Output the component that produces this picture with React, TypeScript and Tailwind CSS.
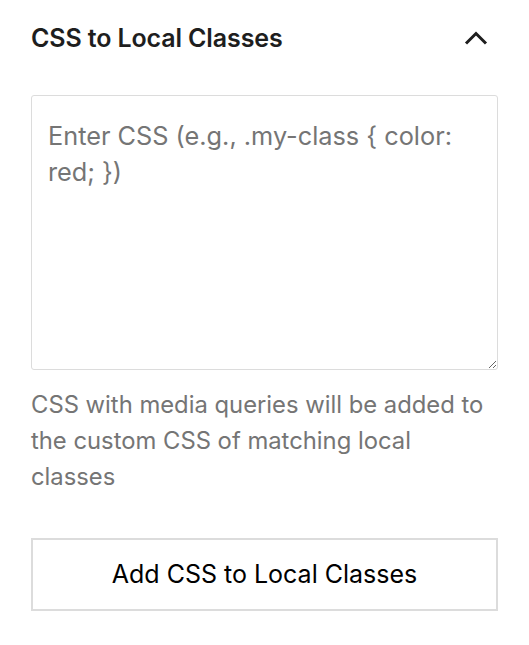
export default function App() {
  return (
    <div className="min-h-screen bg-white px-[31px] pt-[21px] font-['Inter',sans-serif] text-[#1e1e1e]">
      <div className="flex items-center justify-between">
        <h2 className="text-[25px] font-semibold leading-[34px] tracking-[-0.005em]">CSS to Local Classes</h2>
        <button type="button" aria-label="Collapse panel" className="mr-[10px] flex items-center text-[#1e1e1e]">
          <svg width="24" height="14" viewBox="0 0 24 14" fill="none" aria-hidden>
            <path d="M2 12.5 12 2.5l10 10" stroke="currentColor" strokeWidth="3" />
          </svg>
        </button>
      </div>

      <textarea
        className="mt-[40px] block h-[275px] w-full resize-y rounded-[3px] border-[1.5px] border-[#dcdcdc] px-[16px] pt-[22px] text-[25.3px] leading-[36px] text-[#1e1e1e] outline-none placeholder:text-[#757575]"
        placeholder="Enter CSS (e.g., .my-class { color: red; })"
      />

      <p className="mt-[17px] text-[23.8px] leading-[36px] text-[#757575]">
        CSS with media queries will be added to the custom CSS of matching local classes
      </p>

      <button
        type="button"
        className="mt-[43px] flex h-[73px] w-full items-center justify-center border-2 border-[#dcdcdc] text-[25px] text-black"
      >
        Add CSS to Local Classes
      </button>
    </div>
  );
}
